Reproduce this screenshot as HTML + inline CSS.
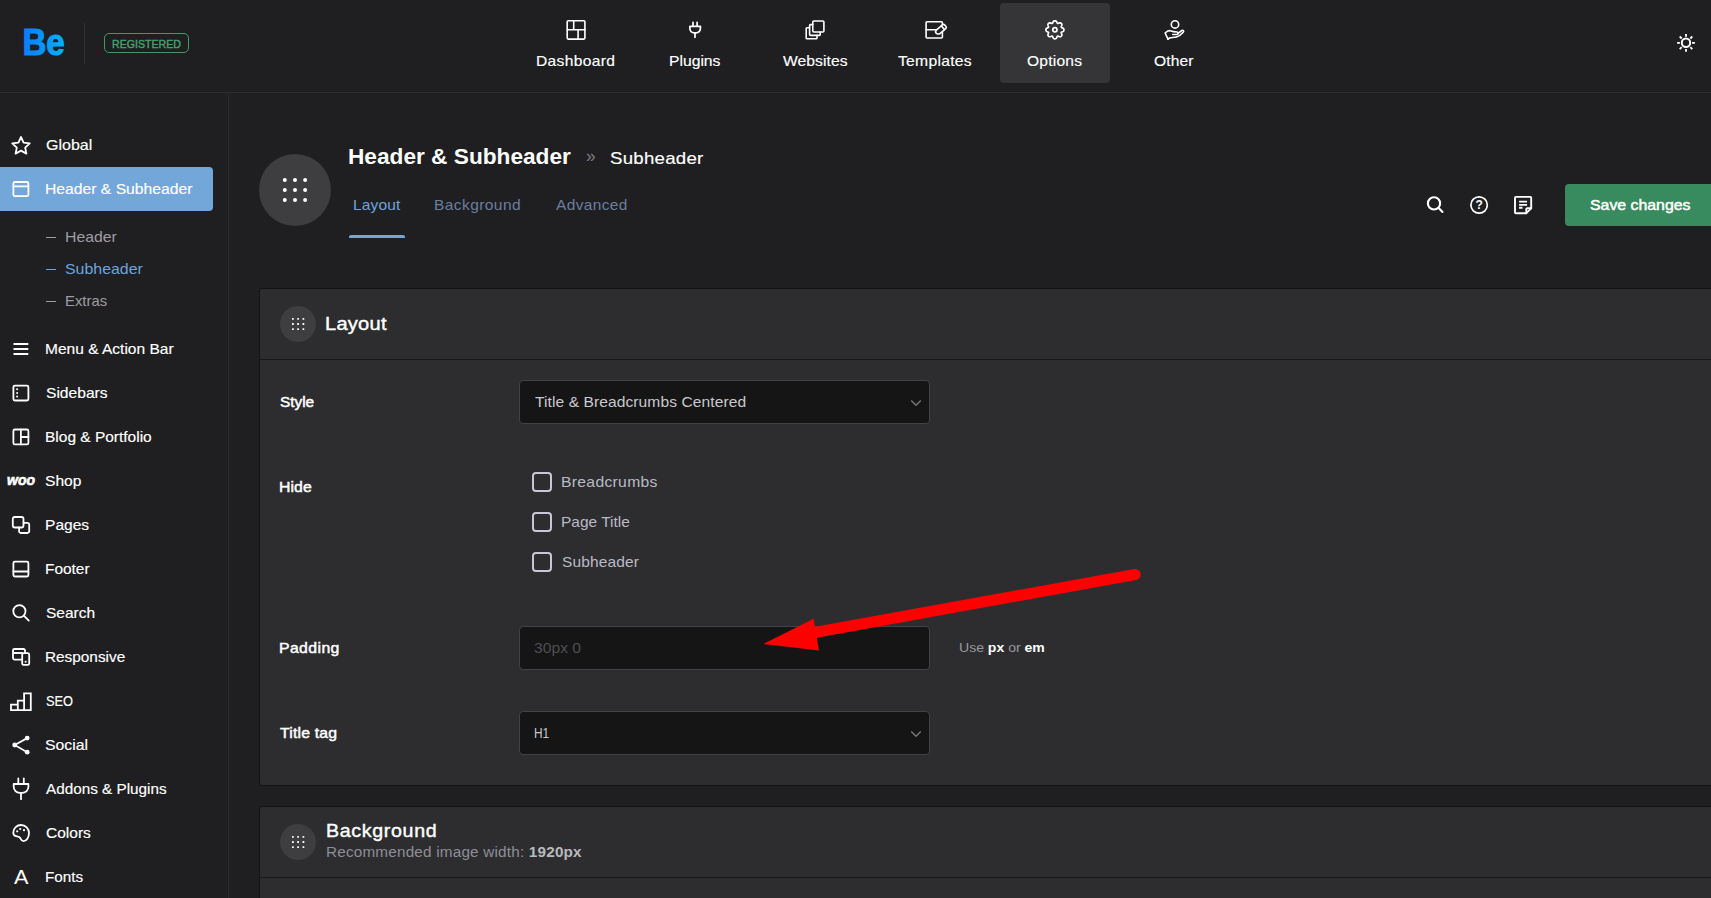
<!DOCTYPE html>
<html lang="en">
<head>
<meta charset="utf-8">
<title>Theme Options – Header &amp; Subheader</title>
<style>
*{box-sizing:border-box;margin:0;padding:0}
html,body{width:1711px;height:898px;overflow:hidden;background:#1f1f22}
body{position:relative;font-family:"Liberation Sans",sans-serif;color:#fff}
.tx{position:absolute;white-space:nowrap;line-height:1;display:block}
.tx b{font-weight:700}
#use b{color:#fff}
#c2s b{color:#b9b9be}
.abs{position:absolute}
svg{position:absolute;overflow:visible}
.ic{fill:none;stroke:#fff;stroke-width:1.5;stroke-linecap:round;stroke-linejoin:round}
header{position:absolute;left:0;top:0;width:1711px;height:93px;border-bottom:1px solid #2c2c2f}
aside{position:absolute;left:0;top:93px;width:229px;height:805px;border-right:1px solid #2a2a2d}
.card{position:absolute;left:259px;width:1460px;background:#2d2d30;border:1px solid #131314;border-radius:3px}
.card .sep{position:absolute;left:0;width:100%;height:1px;background:#19191b}
.circ{position:absolute;border-radius:50%;background:#3e3e41}
.field{position:absolute;left:519px;width:411px;height:44px;background:#151515;border:1px solid #434147;border-radius:4px}
.cb{position:absolute;left:532px;width:20px;height:20px;border:2px solid #cac6d6;border-radius:4px}
</style>
</head>
<body>
<!-- TOP BAR -->
<header>
  <svg style="left:0;top:0" width="90" height="92" viewBox="0 0 90 92"><defs><linearGradient id="beg" x1="23" y1="0" x2="65" y2="0" gradientUnits="userSpaceOnUse"><stop offset="0" stop-color="#0a7cff"/><stop offset="1" stop-color="#00b2ff"/></linearGradient></defs><text id="logo" x="22.4" y="55.3" font-family="Liberation Sans, sans-serif" font-size="37" font-weight="700" textLength="42.3" lengthAdjust="spacingAndGlyphs" fill="url(#beg)" stroke="url(#beg)" stroke-width="1.1" stroke-linejoin="round">Be</text></svg>
  <div class="abs" style="left:84px;top:22px;width:1px;height:42px;background:#2e2e31"></div>
  <div class="abs" style="left:104px;top:33px;width:85px;height:20px;border:1px solid #3f9a62;border-radius:5px"></div>
  <span class="tx" id="reg" style="left:111.51px;top:38.22px;font-size:11.6px;font-weight:400;-webkit-text-stroke:0.4px currentColor;color:#45a56c;transform:scaleX(0.9155);transform-origin:0 0;">REGISTERED</span>
  <nav>
    <div class="abs" style="left:1000px;top:3px;width:110px;height:80px;background:#353538;border-radius:4px"></div>
    
<svg style="left:0;top:0;stroke-width:1.6" width="1711" height="92" viewBox="0 0 1711 92" class="ic">
  <g id="ic-dashboard"><rect x="567.2" y="20.8" width="17.7" height="18.3" rx="1"/><path d="M573.7 20.8 V29.7 M567.2 29.7 H584.9 M578.1 29.7 V39.1"/></g>
  <g id="ic-plugins" stroke-width="1.7"><path d="M689.9 26.4 H700.4 V28.6 a4.2 4.2 0 0 1 -4.2 4.2 h-2.1 a4.2 4.2 0 0 1 -4.2 -4.2 Z M693 26.4 V22.3 M697.1 26.4 V22.3 M695 32.8 V37.3"/></g>
  <g id="ic-websites"><rect x="812.8" y="21" width="11.1" height="11" rx="1"/><path d="M812.8 24.6 H810.4 a.8 .8 0 0 0 -.8 .8 V34.6 a.8 .8 0 0 0 .8 .8 H819.4 a.8 .8 0 0 0 .8 -.8 V32"/><path d="M809.6 27.8 H807 a.8 .8 0 0 0 -.8 .8 V38 a.8 .8 0 0 0 .8 .8 H816.2 a.8 .8 0 0 0 .8 -.8 V35.4"/></g>
  <g id="ic-templates"><rect x="926.1" y="21.8" width="16.3" height="16.2" rx="1"/><path d="M926.1 29.8 H937"/><g transform="translate(936.1 33.5) rotate(-40.5)"><path d="M0.2 0 L0.6 -1.6 L2.4 -2.5 L10.5 -2.5 a1.6 1.6 0 0 1 1.6 1.6 L12.1 0.9 a1.6 1.6 0 0 1 -1.6 1.6 L2.4 2.5 L0.9 1.5 Z" fill="#1f1f22"/><path d="M8.9 -2.5 V2.5"/></g></g>
  <g id="ic-options" stroke-width="1.7"><path d="M1063.90 29.80 L1063.88 30.24 L1063.76 30.67 L1063.49 31.07 L1063.05 31.42 L1062.50 31.70 L1061.95 31.94 L1061.52 32.17 L1061.27 32.44 L1061.25 32.80 L1061.40 33.27 L1061.62 33.83 L1061.81 34.42 L1061.87 34.97 L1061.78 35.45 L1061.56 35.84 L1061.26 36.16 L1060.94 36.46 L1060.55 36.68 L1060.07 36.77 L1059.52 36.71 L1058.93 36.52 L1058.37 36.30 L1057.90 36.15 L1057.54 36.17 L1057.27 36.42 L1057.04 36.85 L1056.80 37.40 L1056.52 37.95 L1056.17 38.39 L1055.77 38.66 L1055.34 38.78 L1054.90 38.80 L1054.46 38.78 L1054.03 38.66 L1053.63 38.39 L1053.28 37.95 L1053.00 37.40 L1052.76 36.85 L1052.53 36.42 L1052.26 36.17 L1051.90 36.15 L1051.43 36.30 L1050.87 36.52 L1050.28 36.71 L1049.73 36.77 L1049.25 36.68 L1048.86 36.46 L1048.54 36.16 L1048.24 35.84 L1048.02 35.45 L1047.93 34.97 L1047.99 34.42 L1048.18 33.83 L1048.40 33.27 L1048.55 32.80 L1048.53 32.44 L1048.28 32.17 L1047.85 31.94 L1047.30 31.70 L1046.75 31.42 L1046.31 31.07 L1046.04 30.67 L1045.92 30.24 L1045.90 29.80 L1045.92 29.36 L1046.04 28.93 L1046.31 28.53 L1046.75 28.18 L1047.30 27.90 L1047.85 27.66 L1048.28 27.43 L1048.53 27.16 L1048.55 26.80 L1048.40 26.33 L1048.18 25.77 L1047.99 25.18 L1047.93 24.63 L1048.02 24.15 L1048.24 23.76 L1048.54 23.44 L1048.86 23.14 L1049.25 22.92 L1049.73 22.83 L1050.28 22.89 L1050.87 23.08 L1051.43 23.30 L1051.90 23.45 L1052.26 23.43 L1052.53 23.18 L1052.76 22.75 L1053.00 22.20 L1053.28 21.65 L1053.63 21.21 L1054.03 20.94 L1054.46 20.82 L1054.90 20.80 L1055.34 20.82 L1055.77 20.94 L1056.17 21.21 L1056.52 21.65 L1056.80 22.20 L1057.04 22.75 L1057.27 23.18 L1057.54 23.43 L1057.90 23.45 L1058.37 23.30 L1058.93 23.08 L1059.52 22.89 L1060.07 22.83 L1060.55 22.92 L1060.94 23.14 L1061.26 23.44 L1061.56 23.76 L1061.78 24.15 L1061.87 24.63 L1061.81 25.18 L1061.62 25.77 L1061.40 26.33 L1061.25 26.80 L1061.27 27.16 L1061.52 27.43 L1061.95 27.66 L1062.50 27.90 L1063.05 28.18 L1063.49 28.53 L1063.76 28.93 L1063.88 29.36 Z"/><circle cx="1054.9" cy="29.8" r="2.1"/></g>
  <g id="ic-other" stroke-width="1.6"><circle cx="1175" cy="24.4" r="3.7"/><path d="M1168 39.2 L1165.1 33 C1166.8 31.3 1169 30.2 1171 30.9 C1173 31.6 1175 31.8 1177 32 C1178.9 32.2 1178.7 34.5 1176.9 34.5 H1172.8"/><path d="M1178 33.3 L1181.8 30.5 C1183.2 29.7 1184.3 31.2 1183.2 32.3 C1181.5 34.3 1179 36.2 1176.5 37 C1174 37.8 1171.2 37.2 1169.6 38 L1168 39.2"/></g>
</svg>
    <span class="tx" id="n1" style="left:535.55px;top:53.87px;font-size:14.3px;font-weight:400;-webkit-text-stroke:0.15px currentColor;color:#ffffff;transform:scaleX(1.09);transform-origin:0 0;letter-spacing:0.32px;">Dashboard</span><span class="tx" id="n2" style="left:668.95px;top:53.87px;font-size:14.3px;font-weight:400;-webkit-text-stroke:0.15px currentColor;color:#ffffff;transform:scaleX(1.0965);transform-origin:0 0;">Plugins</span><span class="tx" id="n3" style="left:782.82px;top:53.87px;font-size:14.3px;font-weight:400;-webkit-text-stroke:0.15px currentColor;color:#ffffff;transform:scaleX(1.0965);transform-origin:0 0;letter-spacing:0.04px;">Websites</span><span class="tx" id="n4" style="left:897.96px;top:53.87px;font-size:14.3px;font-weight:400;-webkit-text-stroke:0.15px currentColor;color:#ffffff;transform:scaleX(1.0965);transform-origin:0 0;letter-spacing:0.25px;">Templates</span><span class="tx" id="n5" style="left:1026.58px;top:53.87px;font-size:14.3px;font-weight:400;-webkit-text-stroke:0.15px currentColor;color:#ffffff;transform:scaleX(1.09);transform-origin:0 0;letter-spacing:0.2px;">Options</span><span class="tx" id="n6" style="left:1153.78px;top:53.87px;font-size:14.3px;font-weight:400;-webkit-text-stroke:0.15px currentColor;color:#ffffff;transform:scaleX(1.09);transform-origin:0 0;letter-spacing:0.11px;">Other</span>
  </nav>
  <svg style="left:0;top:0;stroke-width:1.8" width="1711" height="92" viewBox="0 0 1711 92" class="ic" stroke-linecap="butt"><g id="ic-sun" stroke-linecap="butt"><circle cx="1686" cy="42.8" r="4.2" stroke-width="2"/><path d="M1692.10 42.80 L1694.90 42.80 M1690.31 47.11 L1692.29 49.09 M1686.00 48.90 L1686.00 51.70 M1681.69 47.11 L1679.71 49.09 M1679.90 42.80 L1677.10 42.80 M1681.69 38.49 L1679.71 36.51 M1686.00 36.70 L1686.00 33.90 M1690.31 38.49 L1692.29 36.51" stroke-linecap="butt"/></g></svg>
</header>

<!-- SIDEBAR -->
<aside></aside>
<div class="abs" style="left:0;top:167px;width:213px;height:44px;background:#73a6d9;border-radius:0 4px 4px 0"></div>

<svg style="left:0;top:0;stroke-width:1.8" width="229" height="898" viewBox="0 0 229 898" class="ic">
  <polygon id="ic-global" points="21.00,137.00 23.59,142.64 29.75,143.36 25.18,147.56 26.41,153.64 21.00,150.60 15.59,153.64 16.82,147.56 12.25,143.36 18.41,142.64"/>
  <g id="ic-header"><rect x="13.4" y="182" width="15" height="14.2" rx="1.5"/><path d="M13.4 186.4 H28.4"/></g>
  <path id="ic-menu" d="M13.5 344 H28.3 M13.5 349 H28.3 M13.5 353.9 H28.3" stroke-width="2" stroke-linecap="butt"/>
  <g id="ic-sidebars"><rect x="13.4" y="385.6" width="15" height="14.9" rx="1.5"/><g fill="#fff" stroke="none"><circle cx="17.1" cy="389.3" r="1"/><circle cx="17.1" cy="393" r="1"/><circle cx="17.1" cy="396.6" r="1"/></g></g>
  <g id="ic-blog"><rect x="13.4" y="429.5" width="15" height="14.9" rx="1.5"/><path d="M20.9 429.5 V444.4 M20.9 437 H28.4"/></g>
  <g id="ic-pages"><rect x="12.8" y="517" width="10.7" height="10.5" rx="2"/><path d="M23.5 522.8 H27.4 a1.8 1.8 0 0 1 1.8 1.8 V531.2 a1.8 1.8 0 0 1 -1.8 1.8 H20.9 a1.8 1.8 0 0 1 -1.8 -1.8 V527.5"/></g>
  <g id="ic-footer"><rect x="13.4" y="561.6" width="15" height="14.9" rx="1.5"/><path d="M13.4 571.5 H28.4"/></g>
  <g id="ic-search"><circle cx="19.4" cy="611.3" r="6.1"/><path d="M23.8 615.7 L28.8 620.6"/></g>
  <g id="ic-responsive"><path d="M25 653.2 V650.5 a1.5 1.5 0 0 0 -1.5 -1.5 H14.5 a1.5 1.5 0 0 0 -1.5 1.5 V658.1 a1.5 1.5 0 0 0 1.5 1.5 H22.2 M13 653 H22.2"/><rect x="22.2" y="653.2" width="7" height="11.7" rx="1.5"/><circle cx="25.6" cy="661.7" r="1" fill="#fff" stroke="none"/></g>
  <g id="ic-seo" stroke-linejoin="miter"><path d="M11 710.2 V704.6 H17.8 V710.2 Z M17.8 704.6 V700.6 H24.1 V710.2 H17.8 M24.1 700.6 V693.3 H30.8 V710.2 H24.1"/></g>
  <g id="ic-social"><path d="M27.2 738.1 L14.7 745 L27.2 752.2"/><g fill="#fff" stroke="none"><circle cx="14.7" cy="745" r="2.4"/><circle cx="27.2" cy="738.1" r="2.4"/><circle cx="27.2" cy="752.2" r="2.4"/></g></g>
  <g id="ic-addons"><path d="M13.7 784 H28.4 V786.8 a6 6 0 0 1 -6 6 h-2.7 a6 6 0 0 1 -6 -6 Z M18.3 784 V778.5 M23.8 784 V778.5 M21 792.8 V799.2"/></g>
  <g id="ic-colors"><path d="M13.3 832.5 C13.3 828 17 825 21 825 C25.5 825 29 828.5 29 833 C29 837.5 26.5 841.2 23.5 841.2 C21.5 841.2 21 839.5 20.2 838 C19.4 836.5 17.5 836.6 16 836.2 C14.3 835.8 13.3 834.5 13.3 832.5 Z"/><g fill="#fff" stroke="none"><circle cx="17.2" cy="831.3" r="1.1"/><circle cx="20.2" cy="829" r="1.1"/><circle cx="24" cy="830.2" r="1.1"/></g></g>
</svg>
<span class="tx" id="ic-fonts" aria-hidden="true" style="left:14.2px;top:867.2px;font-size:20.4px;color:#fff;transform:scaleX(1.06);transform-origin:0 0">A</span>
<span class="tx" id="s1" style="left:45.6px;top:137.62px;font-size:14.8px;font-weight:400;-webkit-text-stroke:0.15px currentColor;color:#ffffff;transform:scaleX(1.0819);transform-origin:0 0;">Global</span><span class="tx" id="s2" style="left:44.75px;top:181.62px;font-size:14.8px;font-weight:400;-webkit-text-stroke:0.15px currentColor;color:#ffffff;transform:scaleX(1.0605);transform-origin:0 0;">Header &amp; Subheader</span>
<div class="abs" style="left:46px;top:237px;width:10px;height:1px;background:#a09ca3"></div>
<div class="abs" style="left:46px;top:269px;width:10px;height:1px;background:#6ea3dc"></div>
<div class="abs" style="left:46px;top:301px;width:10px;height:1px;background:#a09ca3"></div>
<span class="tx" id="s2a" style="left:64.7px;top:229.62px;font-size:14.8px;font-weight:400;color:#a09ca3;transform:scaleX(1.0671);transform-origin:0 0;">Header</span><span class="tx" id="s2b" style="left:64.81px;top:261.62px;font-size:14.8px;font-weight:400;color:#6ea3dc;transform:scaleX(1.0745);transform-origin:0 0;">Subheader</span><span class="tx" id="s2c" style="left:64.75px;top:293.62px;font-size:14.8px;font-weight:400;color:#a09ca3;transform:scaleX(1.0053);transform-origin:0 0;">Extras</span>
<span class="tx" id="s3" style="left:44.76px;top:341.62px;font-size:14.8px;font-weight:400;-webkit-text-stroke:0.15px currentColor;color:#ffffff;transform:scaleX(1.049);transform-origin:0 0;">Menu &amp; Action Bar</span><span class="tx" id="s4" style="left:45.79px;top:385.62px;font-size:14.8px;font-weight:400;-webkit-text-stroke:0.15px currentColor;color:#ffffff;transform:scaleX(1.0542);transform-origin:0 0;">Sidebars</span><span class="tx" id="s5" style="left:44.76px;top:429.62px;font-size:14.8px;font-weight:400;-webkit-text-stroke:0.15px currentColor;color:#ffffff;transform:scaleX(1.0463);transform-origin:0 0;">Blog &amp; Portfolio</span><span class="tx" id="woo" style="left:6.77px;top:473.02px;font-size:14px;font-weight:700;font-style:italic;-webkit-text-stroke:0.6px currentColor;color:#ffffff;transform:scaleX(1.0025);transform-origin:0 0;">woo</span><span class="tx" id="s6" style="left:44.89px;top:473.62px;font-size:14.8px;font-weight:400;-webkit-text-stroke:0.15px currentColor;color:#ffffff;transform:scaleX(1.0541);transform-origin:0 0;">Shop</span><span class="tx" id="s7" style="left:44.76px;top:517.62px;font-size:14.8px;font-weight:400;-webkit-text-stroke:0.15px currentColor;color:#ffffff;transform:scaleX(1.0518);transform-origin:0 0;">Pages</span><span class="tx" id="s8" style="left:44.77px;top:561.62px;font-size:14.8px;font-weight:400;-webkit-text-stroke:0.15px currentColor;color:#ffffff;transform:scaleX(1.0417);transform-origin:0 0;">Footer</span><span class="tx" id="s9" style="left:45.79px;top:605.62px;font-size:14.8px;font-weight:400;-webkit-text-stroke:0.15px currentColor;color:#ffffff;transform:scaleX(1.0478);transform-origin:0 0;">Search</span><span class="tx" id="s10" style="left:44.77px;top:649.62px;font-size:14.8px;font-weight:400;-webkit-text-stroke:0.15px currentColor;color:#ffffff;transform:scaleX(1.0368);transform-origin:0 0;">Responsive</span><span class="tx" id="s11" style="left:45.63px;top:693.62px;font-size:14.8px;font-weight:400;-webkit-text-stroke:0.15px currentColor;color:#ffffff;transform:scaleX(0.8667);transform-origin:0 0;">SEO</span><span class="tx" id="s12" style="left:44.88px;top:737.62px;font-size:14.8px;font-weight:400;-webkit-text-stroke:0.15px currentColor;color:#ffffff;transform:scaleX(1.064);transform-origin:0 0;">Social</span><span class="tx" id="s13" style="left:45.81px;top:781.62px;font-size:14.8px;font-weight:400;-webkit-text-stroke:0.15px currentColor;color:#ffffff;transform:scaleX(1.0321);transform-origin:0 0;">Addons &amp; Plugins</span><span class="tx" id="s14" style="left:45.64px;top:825.62px;font-size:14.8px;font-weight:400;-webkit-text-stroke:0.15px currentColor;color:#ffffff;transform:scaleX(1.0486);transform-origin:0 0;">Colors</span><span class="tx" id="s15" style="left:44.78px;top:869.62px;font-size:14.8px;font-weight:400;-webkit-text-stroke:0.15px currentColor;color:#ffffff;transform:scaleX(1.03);transform-origin:0 0;">Fonts</span>

<!-- PAGE HEADER -->
<main>
<div class="circ" style="left:259px;top:154px;width:72px;height:72px"></div>
<svg style="left:279px;top:174px" width="32" height="32" viewBox="0 0 32 32" fill="#fff">
  <circle cx="5.8" cy="5.9" r="2"/><circle cx="16" cy="5.9" r="2"/><circle cx="26.1" cy="5.9" r="2"/>
  <circle cx="5.8" cy="16" r="2"/><circle cx="16" cy="16" r="2"/><circle cx="26.1" cy="16" r="2"/>
  <circle cx="5.8" cy="26.1" r="2"/><circle cx="16" cy="26.1" r="2"/><circle cx="26.1" cy="26.1" r="2"/>
</svg>
<span class="tx" id="h1" style="left:347.79px;top:145.92px;font-size:21.2px;font-weight:700;color:#ffffff;transform:scaleX(1.0694);transform-origin:0 0;">Header &amp; Subheader</span><span class="tx" id="h1s" style="left:585.61px;top:148.27px;font-size:17.5px;font-weight:400;color:#7c7c81;transform:scaleX(0.9813);transform-origin:0 0;">»</span><span class="tx" id="h1b" style="left:609.64px;top:150.02px;font-size:17px;font-weight:400;-webkit-text-stroke:0.15px currentColor;color:#ffffff;transform:scaleX(1.0965);transform-origin:0 0;letter-spacing:0.24px;">Subheader</span>
<span class="tx" id="t1" style="left:352.7px;top:197.92px;font-size:14.2px;font-weight:400;color:#6ea3dc;transform:scaleX(1.0965);transform-origin:0 0;letter-spacing:0.09px;">Layout</span><span class="tx" id="t2" style="left:433.8px;top:197.92px;font-size:14.2px;font-weight:400;color:#6b7e9f;transform:scaleX(1.0965);transform-origin:0 0;letter-spacing:0.36px;">Background</span><span class="tx" id="t3" style="left:555.76px;top:197.92px;font-size:14.2px;font-weight:400;color:#6b7e9f;transform:scaleX(1.09);transform-origin:0 0;letter-spacing:0.35px;">Advanced</span>
<div class="abs" style="left:349px;top:235px;width:56px;height:3px;background:#73a6d9;border-radius:2px 2px 0 0"></div>

<svg style="left:0;top:0;stroke-width:1.9" width="1711" height="300" viewBox="0 0 1711 300" class="ic">
  <g id="ic-tsearch" stroke-width="2.1"><circle cx="1434" cy="203.4" r="6.1"/><path d="M1438.4 207.8 L1442.5 212"/></g>
  <g id="ic-help" stroke-width="1.7"><circle cx="1479.1" cy="205" r="8.2"/></g>
  <g id="ic-notes"><path d="M1515.8 196.9 H1530.4 a.8 .8 0 0 1 .8 .8 V208.3 L1526.3 213.2 H1515.8 a.8 .8 0 0 1 -.8 -.8 V197.7 a.8 .8 0 0 1 .8 -.8 Z"/><path d="M1531.2 208.3 H1527.1 a.8 .8 0 0 0 -.8 .8 V213.2"/><path d="M1519.1 201.6 H1527.1 M1519.1 204.9 H1527.1 M1519.1 207.8 H1522.5" stroke-linecap="butt" stroke-width="1.9"/></g>
</svg>
<span class="tx" id="ic-q" style="left:1475.4px;top:198.9px;font-size:12px;font-weight:700;color:#fff;width:7.4px;text-align:center">?</span>
<div class="abs" style="left:1565px;top:184px;width:160px;height:42px;background:#378b5e;border-radius:4px"></div>
<span class="tx" id="save" style="left:1589.66px;top:197.72px;font-size:14.6px;font-weight:400;-webkit-text-stroke:0.45px currentColor;color:#ffffff;transform:scaleX(1.0867);transform-origin:0 0;">Save changes</span>

<!-- CARD 1 -->
<section class="card" style="top:288px;height:498px">
  <div class="sep" style="top:70px"></div>
</section>
<div class="circ" style="left:280px;top:306px;width:36px;height:36px"></div>
<svg style="left:290px;top:316px" width="16" height="16" viewBox="0 0 16 16" fill="#fff">
  <rect x="2" y="2" width="1.8" height="1.8" rx=".5"/><rect x="7.2" y="2" width="1.8" height="1.8" rx=".5"/><rect x="12.5" y="2" width="1.8" height="1.8" rx=".5"/>
  <rect x="2" y="7.1" width="1.8" height="1.8" rx=".5"/><rect x="7.2" y="7.1" width="1.8" height="1.8" rx=".5"/><rect x="12.5" y="7.1" width="1.8" height="1.8" rx=".5"/>
  <rect x="2" y="12.3" width="1.8" height="1.8" rx=".5"/><rect x="7.2" y="12.3" width="1.8" height="1.8" rx=".5"/><rect x="12.5" y="12.3" width="1.8" height="1.8" rx=".5"/>
</svg>
<span class="tx" id="c1" style="left:324.62px;top:315.37px;font-size:18.3px;font-weight:400;-webkit-text-stroke:0.4px currentColor;color:#ffffff;transform:scaleX(1.0965);transform-origin:0 0;letter-spacing:0.24px;">Layout</span>
<span class="tx" id="l1" style="left:279.77px;top:394.82px;font-size:14.4px;font-weight:400;-webkit-text-stroke:0.45px currentColor;color:#ffffff;transform:scaleX(1.0681);transform-origin:0 0;">Style</span>
<div class="field" style="top:380px"></div>
<span class="tx" id="sel1" style="left:534.55px;top:394.87px;font-size:14.3px;font-weight:400;color:#c9c9cd;transform:scaleX(1.09);transform-origin:0 0;letter-spacing:0.07px;">Title &amp; Breadcrumbs Centered</span>
<svg style="left:910px;top:399px" width="12" height="8" viewBox="0 0 12 8"><path d="M1.2 1.4 L6 6.3 L10.8 1.4" fill="none" stroke="#757578" stroke-width="1.5"/></svg>
<span class="tx" id="l2" style="left:278.81px;top:479.82px;font-size:14.4px;font-weight:400;-webkit-text-stroke:0.45px currentColor;color:#ffffff;transform:scaleX(1.0965);transform-origin:0 0;letter-spacing:0.07px;">Hide</span>
<div class="cb" style="top:472px"></div><span class="tx" id="cb1" style="left:560.8px;top:474.87px;font-size:14.3px;font-weight:400;color:#babac4;transform:scaleX(1.0965);transform-origin:0 0;letter-spacing:0.29px;">Breadcrumbs</span>
<div class="cb" style="top:512px"></div><span class="tx" id="cb2" style="left:560.81px;top:514.87px;font-size:14.3px;font-weight:400;color:#babac4;transform:scaleX(1.083);transform-origin:0 0;">Page Title</span>
<div class="cb" style="top:552px"></div><span class="tx" id="cb3" style="left:561.5px;top:554.87px;font-size:14.3px;font-weight:400;color:#babac4;transform:scaleX(1.0835);transform-origin:0 0;letter-spacing:0.13px;">Subheader</span>
<span class="tx" id="l3" style="left:278.81px;top:640.82px;font-size:14.4px;font-weight:400;-webkit-text-stroke:0.45px currentColor;color:#ffffff;transform:scaleX(1.0965);transform-origin:0 0;letter-spacing:0.37px;">Padding</span>
<div class="field" style="top:626px"></div>
<span class="tx" id="ph" style="left:533.77px;top:640.87px;font-size:14.3px;font-weight:400;color:#4e4e52;transform:scaleX(1.0962);transform-origin:0 0;">30px 0</span><span class="tx" id="use" style="left:958.79px;top:640.92px;font-size:13.2px;font-weight:400;color:#9a989e;transform:scaleX(1.0641);transform-origin:0 0;">Use <b>px</b> or <b>em</b></span>
<span class="tx" id="l4" style="left:279.82px;top:725.82px;font-size:14.4px;font-weight:400;-webkit-text-stroke:0.45px currentColor;color:#ffffff;transform:scaleX(1.0965);transform-origin:0 0;letter-spacing:0.16px;">Title tag</span>
<div class="field" style="top:711px"></div>
<span class="tx" id="sel2" style="left:533.74px;top:725.87px;font-size:14.3px;font-weight:400;color:#c9c9cd;transform:scaleX(0.8311);transform-origin:0 0;">H1</span>
<svg style="left:910px;top:730px" width="12" height="8" viewBox="0 0 12 8"><path d="M1.2 1.4 L6 6.3 L10.8 1.4" fill="none" stroke="#757578" stroke-width="1.5"/></svg>

<!-- CARD 2 -->
<section class="card" style="top:806px;height:120px">
  <div class="sep" style="top:70px"></div>
</section>
<div class="circ" style="left:280px;top:824px;width:36px;height:36px"></div>
<svg style="left:290px;top:834px" width="16" height="16" viewBox="0 0 16 16" fill="#fff">
  <rect x="2" y="2" width="1.8" height="1.8" rx=".5"/><rect x="7.2" y="2" width="1.8" height="1.8" rx=".5"/><rect x="12.5" y="2" width="1.8" height="1.8" rx=".5"/>
  <rect x="2" y="7.1" width="1.8" height="1.8" rx=".5"/><rect x="7.2" y="7.1" width="1.8" height="1.8" rx=".5"/><rect x="12.5" y="7.1" width="1.8" height="1.8" rx=".5"/>
  <rect x="2" y="12.3" width="1.8" height="1.8" rx=".5"/><rect x="7.2" y="12.3" width="1.8" height="1.8" rx=".5"/><rect x="12.5" y="12.3" width="1.8" height="1.8" rx=".5"/>
</svg>
<span class="tx" id="c2" style="left:325.55px;top:821.97px;font-size:18.1px;font-weight:400;-webkit-text-stroke:0.4px currentColor;color:#ffffff;transform:scaleX(1.0835);transform-origin:0 0;letter-spacing:0.62px;">Background</span><span class="tx" id="c2s" style="left:325.6px;top:845.02px;font-size:14px;font-weight:400;color:#8e8e96;transform:scaleX(1.09);transform-origin:0 0;letter-spacing:0.19px;">Recommended image width: <b>1920px</b></span>

<!-- RED ARROW ANNOTATION -->
<svg style="left:0;top:0" width="1711" height="898" viewBox="0 0 1711 898">
  <path d="M1135.2 574.5 L812 633" stroke="#fe0000" stroke-width="11" stroke-linecap="round" fill="none"/>
  <path d="M763.3 644 L813.6 618.7 L819 650.6 Z" fill="#fe0000"/>
</svg>
</main>
</body>
</html>
